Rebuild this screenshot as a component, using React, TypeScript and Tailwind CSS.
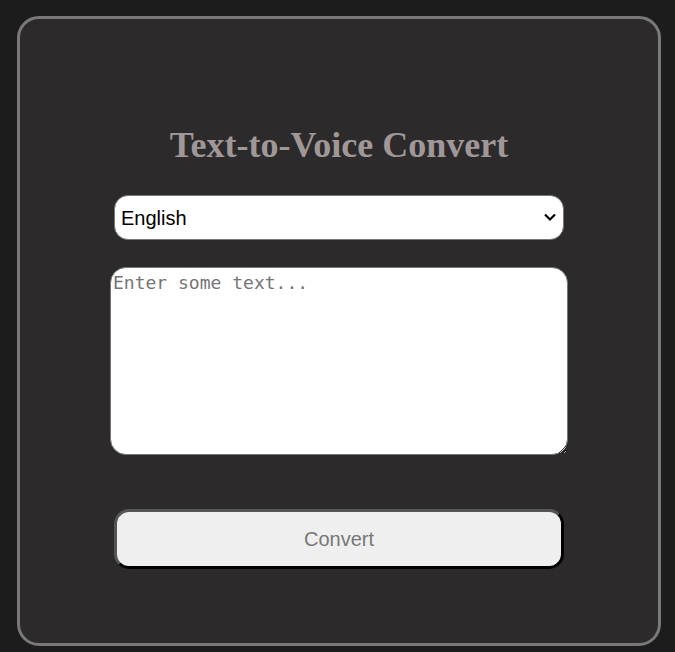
import { useState } from "react";

const languages = ["English", "Spanish", "French", "German", "Hindi"];

const App = () => {
  const [text, setText] = useState("");
  const [lang, setLang] = useState("English");

  return (
    <div className="min-h-screen bg-[#1c1c1c] pt-4 pl-[17px] pr-[14px] pb-[6px]">
      <div className="w-[644px] h-[630px] rounded-[22px] border-[3px] border-[#7a7878] bg-[#2c2a2b] flex flex-col items-center pt-[106px]">
        <h1 className="text-[36px] leading-[41px] font-bold text-[#a09898] font-['Liberation_Serif',serif]">
          Text-to-Voice Convert
        </h1>
        <div className="relative mt-[29px] w-[450px] h-[45px]">
          <select
            value={lang}
            onChange={(e) => setLang(e.target.value)}
            className="appearance-none w-full h-full rounded-[14px] border border-[#767676] bg-white text-black text-[20px] pl-[6px] font-['Liberation_Sans',Arial,sans-serif]"
          >
            {languages.map((l) => (
              <option key={l}>{l}</option>
            ))}
          </select>
          <svg
            className="absolute right-[7px] top-[17px] pointer-events-none"
            width="14"
            height="10"
            viewBox="0 0 14 10"
          >
            <path d="M2 2.5 L7 7.5 L12 2.5" fill="none" stroke="#000" strokeWidth="2.2" />
          </svg>
        </div>
        <textarea
          value={text}
          onChange={(e) => setText(e.target.value)}
          placeholder="Enter some text..."
          className="mt-[27px] w-[458px] h-[188px] rounded-[16px] border border-[#767676] bg-white px-[2px] pt-[4px] text-[18px] leading-[21px] text-black placeholder:text-[#757575] font-['DejaVu_Sans_Mono',monospace]"
        />
        <button className="mt-[54px] w-[450px] h-[60px] rounded-[15px] border-[3px] border-t-[#555] border-l-[#555] border-b-black border-r-black bg-[#efefef] text-[20px] text-[#777] font-['Liberation_Sans',Arial,sans-serif]">
          Convert
        </button>
      </div>
    </div>
  );
};

export default App;
